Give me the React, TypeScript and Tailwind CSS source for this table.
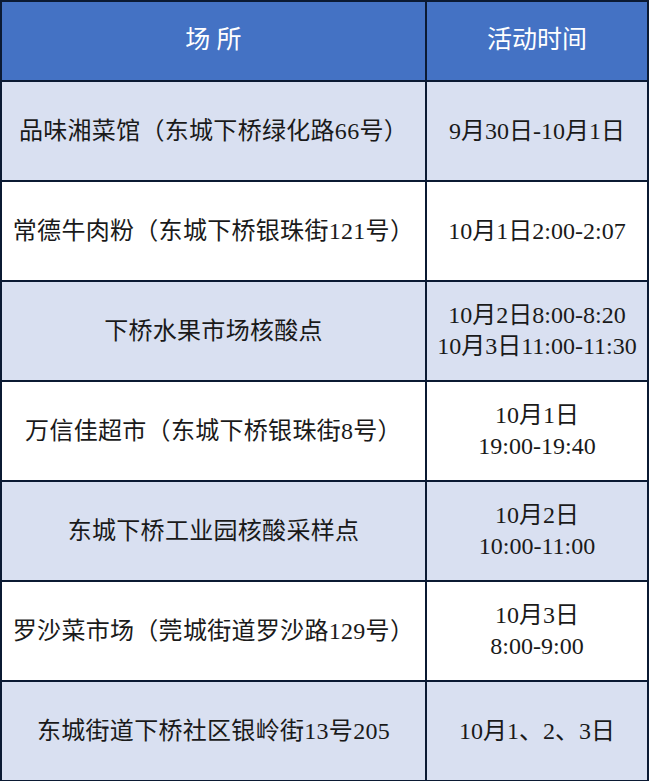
import React from "react";

const rows: { place: string; time: string[]; shaded: boolean }[] = [
  { place: "品味湘菜馆（东城下桥绿化路66号）", time: ["9月30日-10月1日"], shaded: true },
  { place: "常德牛肉粉（东城下桥银珠街121号）", time: ["10月1日2:00-2:07"], shaded: false },
  { place: "下桥水果市场核酸点", time: ["10月2日8:00-8:20", "10月3日11:00-11:30"], shaded: true },
  { place: "万信佳超市（东城下桥银珠街8号）", time: ["10月1日", "19:00-19:40"], shaded: false },
  { place: "东城下桥工业园核酸采样点", time: ["10月2日", "10:00-11:00"], shaded: true },
  { place: "罗沙菜市场（莞城街道罗沙路129号）", time: ["10月3日", "8:00-9:00"], shaded: false },
  { place: "东城街道下桥社区银岭街13号205", time: ["10月1、2、3日"], shaded: true },
];

export default function App() {
  return (
    <div
      className="w-[649px] h-[781px] bg-white text-[#1a1a1a] overflow-hidden"
      style={{ fontFamily: '"Liberation Serif", "Noto Sans CJK SC", serif' }}
    >
      <div className="grid grid-cols-[425px_1fr] border-t-[2px] border-l-[2px] border-[#0b1a33]">
        <div className="h-[80px] bg-[#4472c4] text-white text-[25px] pb-[2px] flex items-center justify-center border-r-[2px] border-b-[2px] border-[#0b1a33]">
          场&nbsp;所
        </div>
        <div className="h-[80px] bg-[#4472c4] text-white text-[25px] pb-[2px] flex items-center justify-center border-r-[2px] border-b-[2px] border-[#0b1a33]">
          活动时间
        </div>
        {rows.map((r, i) => (
          <React.Fragment key={i}>
            <div
              className={`h-[100px] flex items-center justify-center text-[24px] tracking-[0.3px] border-r-[2px] border-b-[2px] border-[#0b1a33] ${r.shaded ? "bg-[#d9e0f1]" : "bg-white"}`}
            >
              {r.place}
            </div>
            <div
              className={`h-[100px] flex flex-col items-center justify-center text-[24px] leading-[31px] border-r-[2px] border-b-[2px] border-[#0b1a33] ${r.shaded ? "bg-[#d9e0f1]" : "bg-white"}`}
            >
              {r.time.map((t, j) => (
                <div key={j}>{t}</div>
              ))}
            </div>
          </React.Fragment>
        ))}
      </div>
    </div>
  );
}
